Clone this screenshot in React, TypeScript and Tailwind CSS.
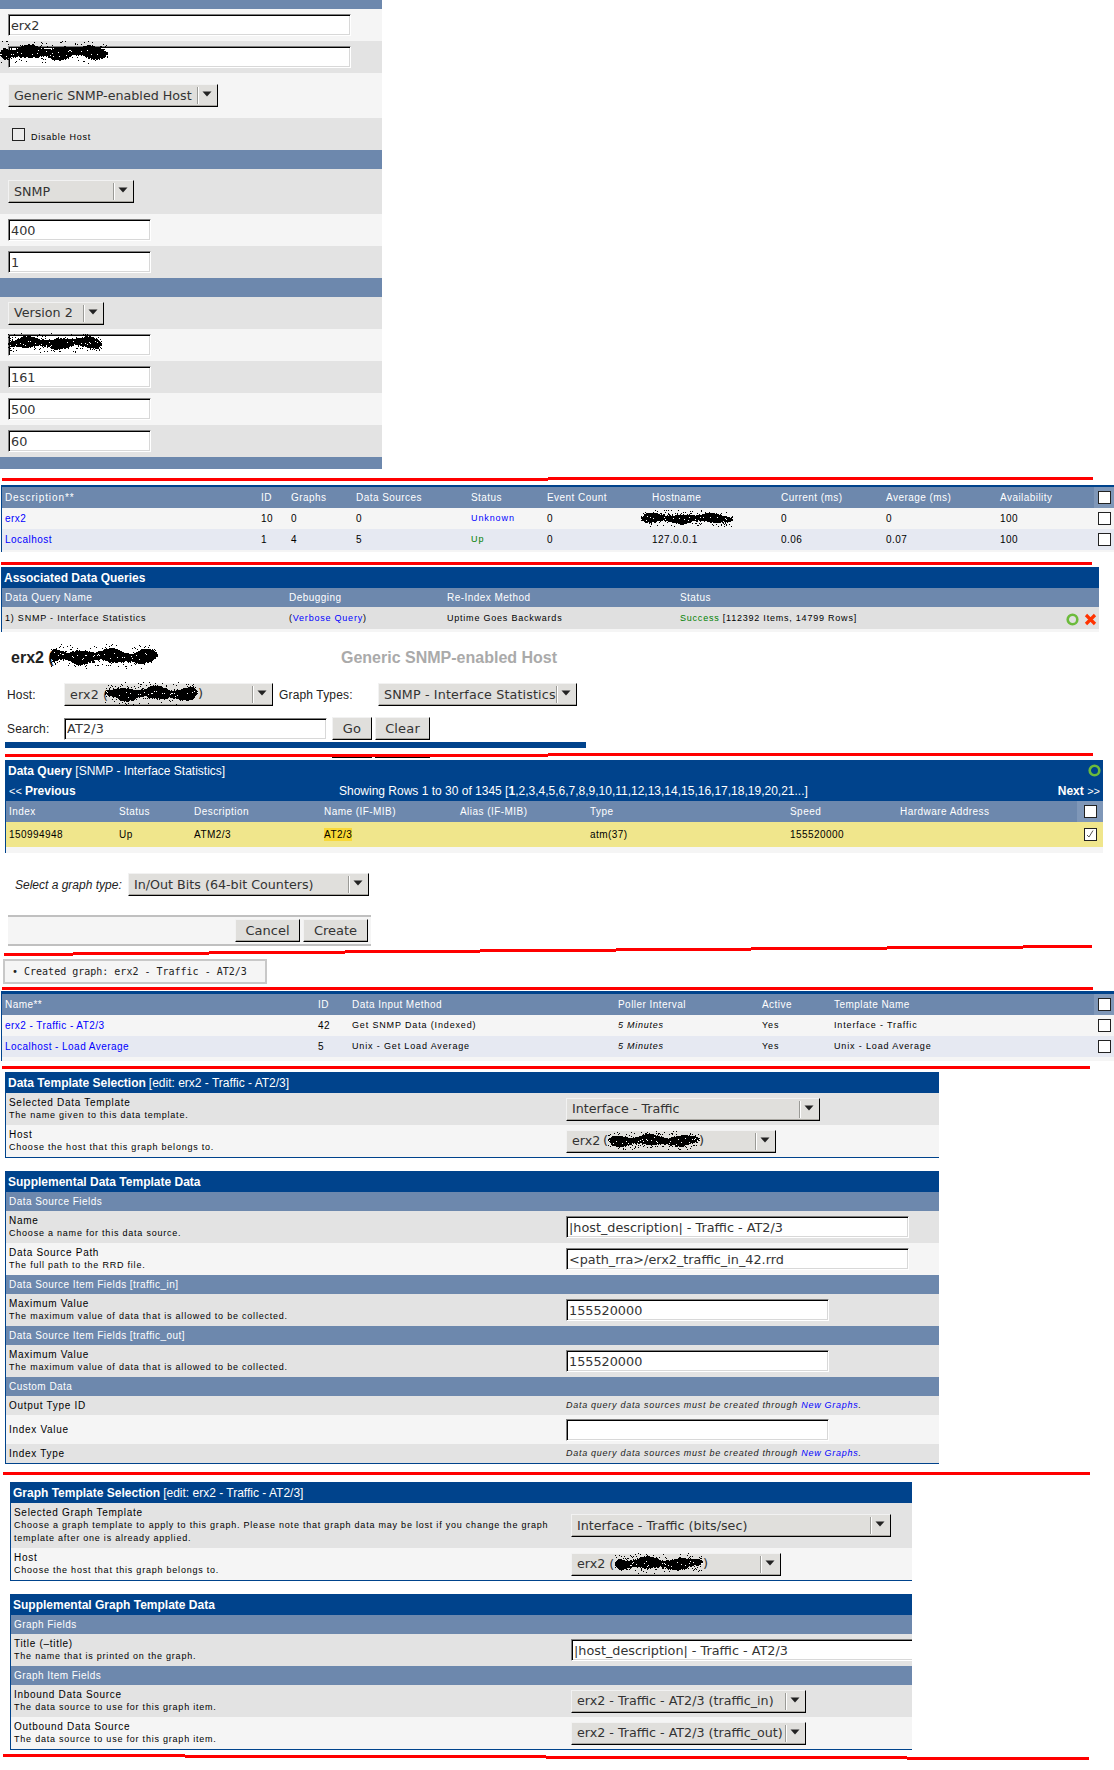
import React from "react";

const HEAD = "text-white text-[10px] tracking-[0.45px] whitespace-nowrap";
const CELL = "text-[10px] tracking-[0.45px] text-black whitespace-nowrap";
const CELL9 = "text-[9px] tracking-[0.78px] text-black whitespace-nowrap";

function Scribble({ w, h, seed, className = "" }: { w: number; h: number; seed: number; className?: string }) {
  const rects: React.ReactElement[] = [];
  let s = seed * 7919 + 13;
  const rnd = () => {
    s = (s * 1664525 + 1013904223) % 4294967296;
    return s / 4294967296;
  };
  for (let x = 0; x < w; x++) {
    const edge = Math.min(1, Math.min(x + 2, w - x + 1) / 6);
    const c = h / 2 + Math.sin(x / 8 + seed) * h * 0.06;
    const half = h * edge * (0.2 + 0.07 * Math.sin(x / 5 + seed * 2) + 0.05 * rnd());
    const top = Math.round(c - half);
    rects.push(<rect key={`b${x}`} x={x} y={top} width="1" height={Math.max(1, Math.round(half * 2))} />);
    const n = 3;
    for (let i = 0; i < n; i++) {
      const g = (rnd() + rnd() + rnd()) / 3 - 0.5;
      const y = Math.floor(c + g * h * 1.5);
      if (rnd() < 0.75) rects.push(<rect key={`d${x}-${i}`} x={x} y={y} width="1" height="1" />);
    }
    if (rnd() < 0.18) {
      rects.push(<rect key={`o${x}`} x={x} y={Math.floor(rnd() * h)} width="1" height="1" />);
    }
    if (rnd() < 0.25) {
      rects.push(<rect key={`w${x}`} x={x} y={Math.round(c + (rnd() - 0.5) * half)} width="1" height="1" fill="#fff" />);
    }
  }
  return (
    <svg width={w} height={h} className={className} shapeRendering="crispEdges" fill="#000">
      {rects}
    </svg>
  );
}

function Red({ segs, h, className = "" }: { segs: number[][]; h: number; className?: string }) {
  return (
    <svg width="1114" height={h} className={`block shrink-0 ${className}`} shapeRendering="crispEdges">
      {segs.map((g, i) => (
        <rect key={i} x={g[0]} y={g[2]} width={g[1] - g[0]} height={g[3] ?? 3} fill={g[4] ? "#000" : "#ff0000"} />
      ))}
    </svg>
  );
}

function Field({ value = "", w, children }: { value?: string; w: string; children?: React.ReactNode }) {
  return (
    <div className={`relative shrink-0 ${w}`}>
      <input
        readOnly
        value={value}
        className="block w-full h-[22px] bg-white pl-[2px] text-[12.8px] text-[#333] font-['DejaVu_Sans',sans-serif] border border-t-[#808080] border-l-[#808080] border-r-white border-b-white shadow-[inset_1px_1px_0_#000,inset_-1px_-1px_0_#d8d8d8] outline-none"
      />
      {children}
    </div>
  );
}

function Arrow() {
  return (
    <svg width="10" height="6" viewBox="0 0 10 6" className="block">
      <path d="M0.5 0.5H9.5L5 5.5Z" fill="#222" />
    </svg>
  );
}

function Select({ text, w, children }: { text: string; w: string; children?: React.ReactNode }) {
  return (
    <div className={`relative shrink-0 flex items-center h-[23px] bg-[#e0dfdc] border-t border-l border-t-[#f2f2f2] border-l-[#f2f2f2] border-r border-b border-r-black border-b-black shadow-[inset_0_-1px_0_#a8a6a0] ${w}`}>
      <span className="flex-1 min-w-0 pl-[5px] text-[12.7px] leading-[20px] text-[#333] font-['DejaVu_Sans',sans-serif] whitespace-nowrap">{text}</span>
      <span className="w-[2px] h-[17px] border-l border-r border-l-[#9a9a96] border-r-white shrink-0" />
      <span className="w-[18px] shrink-0 flex justify-center pr-[2px] pb-[3px]"><Arrow /></span>
      {children}
    </div>
  );
}

function Btn({ text, w }: { text: string; w: string }) {
  return (
    <div className={`shrink-0 flex items-center justify-center h-[23px] bg-[#e0dfdc] border-t border-l border-t-[#f2f2f2] border-l-[#f2f2f2] border-r border-b border-r-black border-b-black shadow-[inset_0_-1px_0_#a8a6a0] text-[13px] text-[#333] font-['DejaVu_Sans',sans-serif] ${w}`}>
      {text}
    </div>
  );
}

function Check({ checked = false, bg = "bg-white" }: { checked?: boolean; bg?: string }) {
  return (
    <span className={`block w-[13px] h-[13px] border border-[#222] shrink-0 ${bg}`}>
      {checked && (
        <svg width="11" height="11" viewBox="0 0 11 11" className="block">
          <path d="M2 6L4 8L8 1.5" fill="none" stroke="#555" strokeWidth="1" />
        </svg>
      )}
    </span>
  );
}

function Ring() {
  return (
    <svg width="13" height="13" viewBox="0 0 13 13" className="block shrink-0">
      <circle cx="6.5" cy="6.5" r="4.8" fill="none" stroke="#6cbb3c" strokeWidth="2.6" />
    </svg>
  );
}

function Cross() {
  return (
    <svg width="13" height="13" viewBox="0 0 13 13" className="block shrink-0">
      <path d="M2 2L11 11M11 2L2 11" stroke="#ff3300" strokeWidth="3.2" />
    </svg>
  );
}

function LRow({ bg, h, children }: { bg: string; h: string; children?: React.ReactNode }) {
  return <div className={`flex items-center pl-[8px] ${bg} ${h}`}>{children}</div>;
}

function TopForm() {
  return (
    <div className="w-[382px] flex flex-col">
      <div className="h-[9px] bg-[#6d88ad]" />
      <LRow bg="bg-[#f5f5f5]" h="h-[32px]"><Field w="w-[343px]" value="erx2" /></LRow>
      <LRow bg="bg-[#e3e3e3]" h="h-[32px]">
        <Field w="w-[343px]"><Scribble w={108} h={23} seed={1} className="absolute left-[-8px] top-[-5px]" /></Field>
      </LRow>
      <LRow bg="bg-[#f5f5f5]" h="h-[45px]"><Select w="w-[210px]" text="Generic SNMP-enabled Host" /></LRow>
      <div className="h-[32px] bg-[#e3e3e3] flex items-center pl-[12px]">
        <Check bg="bg-[#ececec]" />
        <span className="ml-[6px] mt-[8px] text-[9px] tracking-[0.75px] text-black">Disable Host</span>
      </div>
      <div className="h-[19px] bg-[#6d88ad]" />
      <LRow bg="bg-[#e3e3e3]" h="h-[45px]"><Select w="w-[126px]" text="SNMP" /></LRow>
      <LRow bg="bg-[#f5f5f5]" h="h-[32px]"><Field w="w-[143px]" value="400" /></LRow>
      <LRow bg="bg-[#e3e3e3]" h="h-[32px]"><Field w="w-[143px]" value="1" /></LRow>
      <div className="h-[19px] bg-[#6d88ad]" />
      <LRow bg="bg-[#e3e3e3]" h="h-[32px]"><Select w="w-[96px]" text="Version 2" /></LRow>
      <LRow bg="bg-[#f5f5f5]" h="h-[32px]">
        <Field w="w-[143px]"><Scribble w={94} h={20} seed={2} className="absolute left-0 top-[-1px]" /></Field>
      </LRow>
      <LRow bg="bg-[#e3e3e3]" h="h-[32px]"><Field w="w-[143px]" value="161" /></LRow>
      <LRow bg="bg-[#f5f5f5]" h="h-[32px]"><Field w="w-[143px]" value="500" /></LRow>
      <LRow bg="bg-[#e3e3e3]" h="h-[32px]"><Field w="w-[143px]" value="60" /></LRow>
      <div className="h-[12px] bg-[#6d88ad]" />
    </div>
  );
}

const T1 = "grid grid-cols-[259px_30px_65px_115px_76px_105px_129px_105px_114px_94px_20px] items-center";
const T4 = "grid grid-cols-[316px_34px_266px_144px_72px_260px_20px] items-center";

function HostTable() {
  return (
    <div className="ml-px border-l border-[#00438c] w-[1113px] flex flex-col">
      <div className="h-[2px] bg-[#00438c]" />
      <div className={`${T1} h-[21px] bg-[#6d88ad] ${HEAD}`}>
        <span className="pl-[3px] tracking-[0.9px]">Description**</span><span>ID</span><span>Graphs</span><span>Data Sources</span><span>Status</span><span>Event Count</span><span>Hostname</span><span>Current (ms)</span><span>Average (ms)</span><span>Availability</span>
        <span className="h-full bg-[#7f97b8] flex items-center pl-[4px]"><Check /></span>
      </div>
      <div className={`${T1} h-[21px] bg-[#f5f5f5] ${CELL}`}>
        <span className="pl-[3px] text-[#0000ff]">erx2</span><span>10</span><span>0</span><span>0</span><span className="text-[#0000ff] text-[9px] tracking-[0.9px] pt-px">Unknown</span><span>0</span>
        <span className="relative h-full"><Scribble w={92} h={17} seed={3} className="absolute left-[-11px] top-[2px]" /></span>
        <span>0</span><span>0</span><span>100</span>
        <span className="pl-[4px]"><Check /></span>
      </div>
      <div className={`${T1} h-[21px] bg-[#e6e9f2] ${CELL}`}>
        <span className="pl-[3px] text-[#0000ff]">Localhost</span><span>1</span><span>4</span><span>5</span><span className="text-[#008000] text-[9px] tracking-[0.9px] pt-px">Up</span><span>0</span><span>127.0.0.1</span><span>0.06</span><span>0.07</span><span>100</span>
        <span className="pl-[4px]"><Check /></span>
      </div>
      <div className="h-[2px] bg-[#f5f5f5]" />
    </div>
  );
}

function QueriesTable() {
  return (
    <div className="ml-px border-l border-[#00438c] w-[1098px] flex flex-col">
      <div className="h-[21px] bg-[#00438c] flex items-center pl-[2px] text-white text-[12px] font-bold">Associated Data Queries</div>
      <div className={`grid grid-cols-[287px_158px_233px_1fr] items-center h-[19px] bg-[#6d88ad] ${HEAD}`}>
        <span className="pl-[3px]">Data Query Name</span><span>Debugging</span><span>Re-Index Method</span><span>Status</span>
      </div>
      <div className={`grid grid-cols-[287px_158px_233px_1fr] items-center h-[22px] bg-[#e0e0e0] pt-[2px] ${CELL9}`}>
        <span className="pl-[3px]">1) SNMP - Interface Statistics</span>
        <span>(<span className="text-[#0000ff]">Verbose Query</span>)</span>
        <span>Uptime Goes Backwards</span>
        <span className="flex items-center justify-between pr-[2px]">
          <span><span className="text-[#008000]">Success</span> [112392 Items, 14799 Rows]</span>
          <span className="flex items-center gap-[5px] mt-[1px]"><Ring /><Cross /></span>
        </span>
      </div>
      <div className="h-[3px] bg-[#f5f5f5]" />
    </div>
  );
}

function HostFilter() {
  return (
    <div className="flex flex-col">
      <div className="mt-[14px] h-[24px] flex items-center pl-[11px] text-[16px] font-bold whitespace-nowrap">
        <span className="text-[#222] w-[330px] relative">erx2 (<Scribble w={108} h={25} seed={4} className="absolute left-[39px] top-[-2px]" /></span>
        <span className="text-[#aaaaaa]">Generic SNMP-enabled Host</span>
      </div>
      <div className="mt-[13px] flex items-center pl-[7px] text-[12px] tracking-[0.15px] text-[#222]">
        <span className="w-[57px]">Host:</span>
        <Select w="w-[209px]" text="erx2 (">
          <Scribble w={93} h={23} seed={5} className="absolute left-[40px] top-[-2px]" />
          <span className="absolute left-[133px] top-0 text-[13px] leading-[20px] text-[#333] font-['DejaVu_Sans',sans-serif]">)</span>
        </Select>
        <span className="ml-[6px] w-[99px]">Graph Types:</span>
        <Select w="w-[199px]" text="SNMP - Interface Statistics" />
      </div>
      <div className="mt-[11px] flex items-center pl-[7px] text-[12px] tracking-[0.15px] text-[#222]">
        <span className="w-[57px]">Search:</span>
        <Field w="w-[263px]" value="AT2/3" />
        <span className="ml-[5px] flex gap-[3px]">
          <Btn text="Go" w="w-[40px]" />
          <Btn text="Clear" w="w-[55px]" />
        </span>
      </div>
      <div className="mt-[2px] ml-[5px] w-[581px] h-[6px] bg-[#00438c]" />
    </div>
  );
}

function QueryTable() {
  const cols = "grid grid-cols-[113px_75px_130px_136px_130px_200px_110px_177px_26px] items-center";
  return (
    <div className="ml-[5px] border-l border-[#00438c] w-[1098px] flex flex-col">
      <div className="h-[41px] bg-[#00438c] text-white flex flex-col">
        <div className="h-[21px] flex items-center justify-between pl-[2px] pr-[2px] text-[12px]">
          <span><span className="font-bold">Data Query</span> [SNMP - Interface Statistics]</span>
          <Ring />
        </div>
        <div className="h-[20px] flex items-center pl-[3px] pr-[3px] text-[12px]">
          <span className="w-[330px] shrink-0 text-[11px]">&lt;&lt; <span className="font-bold text-[12px]">Previous</span></span>
          <span className="whitespace-nowrap">Showing Rows 1 to 30 of 1345 [<span className="font-bold">1</span>,2,3,4,5,6,7,8,9,10,11,12,13,14,15,16,17,18,19,20,21...]</span>
          <span className="ml-auto"><span className="font-bold text-[12px]">Next</span> <span className="text-[11px]">&gt;&gt;</span></span>
        </div>
      </div>
      <div className={`${cols} h-[21px] bg-[#6d88ad] ${HEAD}`}>
        <span className="pl-[3px]">Index</span><span>Status</span><span>Description</span><span>Name (IF-MIB)</span><span>Alias (IF-MIB)</span><span>Type</span><span>Speed</span><span>Hardware Address</span>
        <span className="h-full bg-[#7f97b8] flex items-center pl-[7px]"><Check /></span>
      </div>
      <div className={`${cols} h-[25px] bg-[#f0e68c] ${CELL}`}>
        <span className="pl-[3px]">150994948</span><span>Up</span><span>ATM2/3</span>
        <span><span className="inline-block bg-[#f8d838] leading-[13px] px-0">AT2/3</span></span>
        <span></span><span>atm(37)</span><span>155520000</span><span></span>
        <span className="pl-[7px]"><Check checked /></span>
      </div>
      <div className="h-[6px] bg-[#f5f5f5]" />
    </div>
  );
}

function GraphType() {
  return (
    <div className="flex flex-col">
      <div className="mt-[20px] flex items-center pl-[15px]">
        <span className="w-[113px] italic text-[12px] text-[#222] whitespace-nowrap">Select a graph type:</span>
        <Select w="w-[241px]" text="In/Out Bits (64-bit Counters)" />
      </div>
      <div className="mt-[19px] ml-[8px] w-[363px] h-[31px] border-y-2 border-y-[#c0c0c0] bg-[#f5f5f5] flex items-center justify-end gap-[3px] pr-[3px]">
        <Btn text="Cancel" w="w-[65px]" />
        <Btn text="Create" w="w-[65px]" />
      </div>
    </div>
  );
}

function DataTable() {
  const c9 = "text-[9px] tracking-[0.85px] pt-px";
  const i9 = "italic text-[9px] tracking-[0.75px] pt-px";
  return (
    <div className="ml-px border-l border-[#00438c] w-[1113px] flex flex-col">
      <div className="h-[3px] bg-[#00438c]" />
      <div className={`${T4} h-[21px] bg-[#6d88ad] ${HEAD}`}>
        <span className="pl-[3px]">Name**</span><span>ID</span><span>Data Input Method</span><span>Poller Interval</span><span>Active</span><span>Template Name</span>
        <span className="h-full bg-[#7f97b8] flex items-center pl-[4px]"><Check /></span>
      </div>
      <div className={`${T4} h-[21px] bg-[#f5f5f5] ${CELL}`}>
        <span className="pl-[3px] text-[#0000ff]">erx2 - Traffic - AT2/3</span><span>42</span><span className={c9}>Get SNMP Data (Indexed)</span><span className={i9}>5 Minutes</span><span className={c9}>Yes</span><span className={c9}>Interface - Traffic</span>
        <span className="pl-[4px]"><Check /></span>
      </div>
      <div className={`${T4} h-[21px] bg-[#e6e9f2] ${CELL}`}>
        <span className="pl-[3px] text-[#0000ff]">Localhost - Load Average</span><span>5</span><span className={c9}>Unix - Get Load Average</span><span className={i9}>5 Minutes</span><span className={c9}>Yes</span><span className={c9}>Unix - Load Average</span>
        <span className="pl-[4px]"><Check /></span>
      </div>
      <div className="h-[4px] bg-[#f5f5f5]" />
    </div>
  );
}

function Title({ bold, rest }: { bold: string; rest?: string }) {
  return (
    <div className="h-[21px] bg-[#00438c] flex items-center pl-[2px] text-white text-[12px] whitespace-nowrap">
      <span className="font-bold">{bold}</span>{rest && <span className="ml-[3px]">{rest}</span>}
    </div>
  );
}

function Sub({ text }: { text: string }) {
  return <div className={`h-[19px] bg-[#6d88ad] flex items-center pl-[3px] ${HEAD}`}>{text}</div>;
}

function FormRow({ label, desc, bg, h, col, children }: { label: string; desc?: string; bg: string; h: string; col: string; children?: React.ReactNode }) {
  return (
    <div className={`flex items-center ${bg} ${h}`}>
      <div className={`pl-[3px] shrink-0 ${col} pr-[12px] text-[9px] leading-[13px] tracking-[0.78px] text-black`}>
        <div className="text-[10px] tracking-[0.7px]">{label}</div>
        {desc && <div>{desc}</div>}
      </div>
      {children}
    </div>
  );
}

function Note() {
  return (
    <span className="italic text-[9px] tracking-[0.72px] text-[#222] whitespace-nowrap">
      Data query data sources must be created through <span className="text-[#0000ff]">New Graphs</span>.
    </span>
  );
}

function DataTemplateForms() {
  const col = "w-[560px]";
  return (
    <>
      <div className="mt-[3px] ml-[5px] w-[934px] border-l border-b border-[#00438c] flex flex-col">
        <Title bold="Data Template Selection" rest="[edit: erx2 - Traffic - AT2/3]" />
        <FormRow col={col} bg="bg-[#e3e3e3]" h="h-[32px]" label="Selected Data Template" desc="The name given to this data template.">
          <Select w="w-[254px]" text="Interface - Traffic" />
        </FormRow>
        <FormRow col={col} bg="bg-[#f5f5f5]" h="h-[32px]" label="Host" desc="Choose the host that this graph belongs to.">
          <Select w="w-[210px]" text="erx2">
            <Scribble w={92} h={19} seed={6} className="absolute left-[41px] top-0" />
            <span className="absolute left-[36px] top-0 text-[13px] leading-[20px] text-[#333] font-['DejaVu_Sans',sans-serif]">(</span>
            <span className="absolute left-[132px] top-0 text-[13px] leading-[20px] text-[#333] font-['DejaVu_Sans',sans-serif]">)</span>
          </Select>
        </FormRow>
      </div>
      <div className="mt-[13px] ml-[5px] w-[934px] border-l border-b border-[#00438c] flex flex-col">
        <Title bold="Supplemental Data Template Data" />
        <Sub text="Data Source Fields" />
        <FormRow col={col} bg="bg-[#e3e3e3]" h="h-[32px]" label="Name" desc="Choose a name for this data source.">
          <Field w="w-[343px]" value="|host_description| - Traffic - AT2/3" />
        </FormRow>
        <FormRow col={col} bg="bg-[#f5f5f5]" h="h-[32px]" label="Data Source Path" desc="The full path to the RRD file.">
          <Field w="w-[343px]" value="<path_rra>/erx2_traffic_in_42.rrd" />
        </FormRow>
        <Sub text="Data Source Item Fields [traffic_in]" />
        <FormRow col={col} bg="bg-[#e3e3e3]" h="h-[32px]" label="Maximum Value" desc="The maximum value of data that is allowed to be collected.">
          <Field w="w-[263px]" value="155520000" />
        </FormRow>
        <Sub text="Data Source Item Fields [traffic_out]" />
        <FormRow col={col} bg="bg-[#e3e3e3]" h="h-[32px]" label="Maximum Value" desc="The maximum value of data that is allowed to be collected.">
          <Field w="w-[263px]" value="155520000" />
        </FormRow>
        <Sub text="Custom Data" />
        <FormRow col={col} bg="bg-[#e3e3e3]" h="h-[19px]" label="Output Type ID"><Note /></FormRow>
        <FormRow col={col} bg="bg-[#f5f5f5]" h="h-[29px]" label="Index Value"><Field w="w-[263px]" /></FormRow>
        <FormRow col={col} bg="bg-[#e3e3e3]" h="h-[19px]" label="Index Type"><Note /></FormRow>
      </div>
    </>
  );
}

function GraphTemplateForms() {
  const col = "w-[560px]";
  return (
    <>
      <div className="mt-[7px] ml-[10px] w-[902px] border-l border-b border-[#00438c] flex flex-col overflow-hidden">
        <Title bold="Graph Template Selection" rest="[edit: erx2 - Traffic - AT2/3]" />
        <FormRow col={col} bg="bg-[#e3e3e3]" h="h-[45px]" label="Selected Graph Template" desc="Choose a graph template to apply to this graph. Please note that graph data may be lost if you change the graph template after one is already applied.">
          <Select w="w-[320px]" text="Interface - Traffic (bits/sec)" />
        </FormRow>
        <FormRow col={col} bg="bg-[#f5f5f5]" h="h-[32px]" label="Host" desc="Choose the host that this graph belongs to.">
          <Select w="w-[210px]" text="erx2 (">
            <Scribble w={88} h={21} seed={7} className="absolute left-[43px] top-[-1px]" />
            <span className="absolute left-[131px] top-0 text-[13px] leading-[20px] text-[#333] font-['DejaVu_Sans',sans-serif]">)</span>
          </Select>
        </FormRow>
      </div>
      <div className="mt-[13px] ml-[10px] w-[902px] border-l border-b border-[#00438c] flex flex-col overflow-hidden">
        <Title bold="Supplemental Graph Template Data" />
        <Sub text="Graph Fields" />
        <FormRow col={col} bg="bg-[#e3e3e3]" h="h-[32px]" label="Title (–title)" desc="The name that is printed on the graph.">
          <Field w="w-[360px]" value="|host_description| - Traffic - AT2/3" />
        </FormRow>
        <Sub text="Graph Item Fields" />
        <FormRow col={col} bg="bg-[#e3e3e3]" h="h-[32px]" label="Inbound Data Source" desc="The data source to use for this graph item.">
          <Select w="w-[235px]" text="erx2 - Traffic - AT2/3 (traffic_in)" />
        </FormRow>
        <FormRow col={col} bg="bg-[#f5f5f5]" h="h-[32px]" label="Outbound Data Source" desc="The data source to use for this graph item.">
          <Select w="w-[235px]" text="erx2 - Traffic - AT2/3 (traffic_out)" />
        </FormRow>
      </div>
    </>
  );
}

export default function App() {
  return (
    <div className="w-[1114px] h-[1770px] bg-white overflow-hidden flex flex-col font-['Liberation_Sans',Arial,sans-serif]">
      <TopForm />
      <Red className="mt-[8px]" h={4} segs={[[2, 548, 1], [548, 1093, 0]]} />
      <div className="mt-[4px]"><HostTable /></div>
      <Red className="mt-[10px]" h={3} segs={[[1, 1092, 0]]} />
      <div className="mt-[2px]"><QueriesTable /></div>
      <HostFilter />
      <Red className="mt-[5px]" h={5} segs={[[332, 372, 4, 1, 1], [375, 430, 4, 1, 1], [5, 548, 1], [548, 1093, 0]]} />
      <div className="mt-[2px]"><QueryTable /></div>
      <GraphType />
      <Red className="-mt-px" h={11} segs={[[4, 73, 8], [73, 209, 7], [209, 345, 6], [345, 480, 5], [480, 616, 4], [616, 751, 3], [751, 887, 2], [887, 1023, 1], [1023, 1092, 0]]} />
      <div className="mt-[3px] ml-[3px] w-[264px] h-[25px] border-2 border-[#c8c8c8] bg-[#f5f5f5] flex items-center pl-[7px] font-['DejaVu_Sans_Mono',monospace] text-[10px] text-[#222] whitespace-pre">• Created graph: erx2 - Traffic - AT2/3</div>
      <Red className="mt-[3px]" h={3} segs={[[2, 1093, 0]]} />
      <div className="mt-px"><DataTable /></div>
      <Red className="mt-[5px]" h={3} segs={[[2, 1090, 0]]} />
      <DataTemplateForms />
      <Red className="mt-[8px]" h={3} segs={[[3, 1090, 0]]} />
      <GraphTemplateForms />
      <Red className="mt-[4px]" h={6} segs={[[3, 185, 0], [185, 546, 1], [546, 907, 2], [907, 1089, 3]]} />
    </div>
  );
}
